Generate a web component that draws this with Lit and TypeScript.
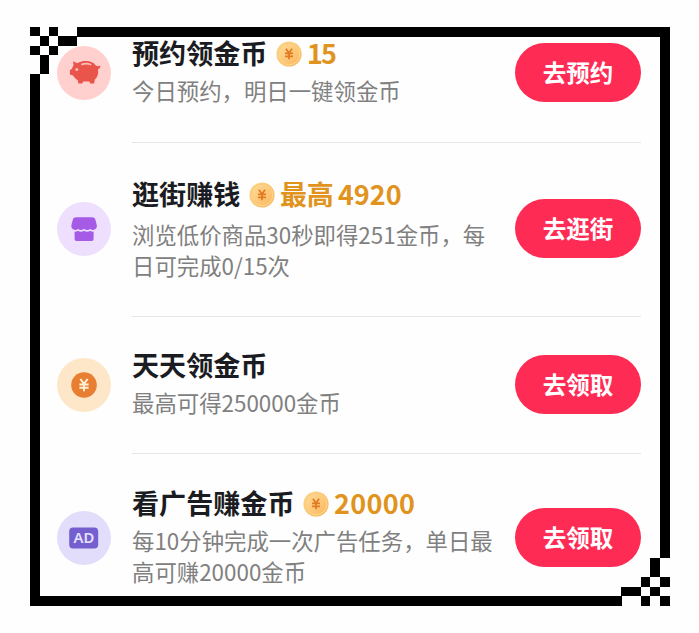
import { LitElement, html, css, svg, nothing, TemplateResult } from "lit";
import { customElement, property } from "lit/decorators.js";

type IconName = "pig" | "shop" | "coin" | "ad";

interface Task {
  id: string;
  icon: IconName;
  title: string;
  prefix?: string;
  reward?: string;
  lines: string[];
  action: string;
}

const TASKS: Task[] = [
  { id: "reserve", icon: "pig", title: "预约领金币", reward: "15", lines: ["今日预约，明日一键领金币"], action: "去预约" },
  { id: "browse", icon: "shop", title: "逛街赚钱", prefix: "最高", reward: "4920", lines: ["浏览低价商品30秒即得251金币，每", "日可完成0/15次"], action: "去逛街" },
  { id: "daily", icon: "coin", title: "天天领金币", lines: ["最高可得250000金币"], action: "去领取" },
  { id: "advert", icon: "ad", title: "看广告赚金币", reward: "20000", lines: ["每10分钟完成一次广告任务，单日最", "高可赚20000金币"], action: "去领取" },
];

const yen = svg`<path d="M-3.6 -6 L0 -1.2 L3.6 -6 M0 -1.2 V6.2 M-4.6 -0.6 H4.6 M-4.6 2.8 H4.6" fill="none" stroke="currentColor" stroke-width="2"/>`;

const GLYPHS: Record<IconName, TemplateResult> = {
  pig: svg`
    <path fill="#e9544b" d="M16 15.2 L20.2 17.3 C22.8 15.6 26 15 29.3 15 C33.6 15 36.8 16.6 38.8 19.6 C40.4 20.4 41.8 20.4 43 19.8 L43.4 20.6 C43.1 22 42.2 22.9 41 23.4 C41.6 27.8 40.6 31.2 37.8 33.6 L37.2 37.4 H33.2 L32.4 35.4 H26.2 L25.2 37.4 H21.4 L20.8 34.2 C18.6 33 17 31.4 16 29.5 L12.9 28.6 V24.2 L15.2 22.6 C15.3 21.2 15.8 20.4 16.6 19.5 Z"/>
    <path d="M25 18.4 C27.6 17.4 31 17.4 33.6 18.5" fill="none" stroke="#fbbdb8" stroke-width="1.7" stroke-linecap="round"/>
    <circle cx="19.8" cy="23.4" r="1.5" fill="#fbbdb8"/>`,
  shop: svg`
    <path fill="#a65be6" d="M19.2 15.2 H35 C36.8 15.2 37.8 16 38.3 17.6 L39.8 23 C40.2 25.4 39.2 27 37.2 27.8 C35.6 28.2 34.2 27.7 33.3 26.7 C31.7 28.4 29 28.4 27.1 26.7 C25.2 28.4 22.5 28.4 20.9 26.7 C20 27.7 18.6 28.2 17 27.8 C15 27 14 25.4 14.4 23 L15.9 17.6 C16.4 16 17.4 15.2 19.2 15.2 Z"/>
    <path fill="#a65be6" d="M17.6 29.6 Q19.4 29.8 20.8 28.7 Q24 31 27.1 28.7 Q30.2 31 33.4 28.7 Q34.8 29.8 36.6 29.6 V36.4 Q36.6 39 34 39 H20.2 Q17.6 39 17.6 36.4 Z"/>`,
  coin: svg`<circle cx="27" cy="27" r="12.8" fill="#e87e32"/><g transform="translate(27 27)" color="#fff0d5">${yen}</g>`,
  ad: svg`<rect x="12.2" y="16.4" width="29" height="21.2" rx="4" fill="#755fcf"/><text x="26.9" y="32.2" class="ad" text-anchor="middle">AD</text>`,
};

@customElement("task-icon")
export class TaskIcon extends LitElement {
  @property() name: IconName = "coin";
  static styles = css`
    :host { display: block; width: 54px; height: 54px; border-radius: 50%; }
    :host([name="pig"]) { background: #ffd0cd; }
    :host([name="shop"]) { background: #eedffe; }
    :host([name="coin"]) { background: #fee7c8; }
    :host([name="ad"]) { background: #e2ddfb; }
    svg { display: block; width: 54px; height: 54px; }
    .ad { font: 600 14.8px "Noto Sans", sans-serif; fill: #e6e1ff; }
  `;
  render() {
    return html`<svg viewBox="0 0 54 54">${GLYPHS[this.name]}</svg>`;
  }
}

@customElement("gold-coin")
export class GoldCoin extends LitElement {
  static styles = css`
    :host { display: block; width: 26px; height: 26px; color: #e27a22; }
    svg { display: block; }
  `;
  render() {
    return html`<svg width="26" height="26" viewBox="0 0 26 26">
      <defs><linearGradient id="g" x1="0" y1="0" x2="1" y2="1">
        <stop offset="0" stop-color="#fbd98f"/><stop offset="1" stop-color="#f7b458"/>
      </linearGradient><linearGradient id="r" x1="0" y1="0" x2="1" y2="1">
        <stop offset="0" stop-color="#f6c670"/><stop offset="1" stop-color="#ffe09a"/>
      </linearGradient><linearGradient id="f" x1="0" y1="0" x2="1" y2="1">
        <stop offset="0" stop-color="#ffdc98"/><stop offset="1" stop-color="#fbb75f"/>
      </linearGradient></defs>
      <circle cx="13" cy="13" r="12.6" fill="url(#g)"/>
      <circle cx="13" cy="13" r="10.8" fill="url(#f)" stroke="url(#r)" stroke-width="1"/>
      <g transform="translate(13 13) scale(.86)">${yen}</g>
    </svg>`;
  }
}

@customElement("pixel-frame")
export class PixelFrame extends LitElement {
  static styles = css`
    :host { display: block; width: 640px; height: 579px; }
    svg { display: block; }
  `;
  render() {
    return html`<svg width="640" height="579" viewBox="0 0 640 579" shape-rendering="crispEdges">
      <path d="M47 0H639.6V531H630V10H47Z"/>
      <path d="M0 47H10V569H592V579H0Z"/>
      <path d="M0 0H10V9H0ZM19 0H28V9H19ZM10 9H19V19H10ZM28 9H47V19H28ZM0 19H10V28H0ZM19 19H28V28H19ZM10 28H19V47H10Z"/>
      <path d="M620 531H630V550H620ZM611 550H620V560H611ZM630 550H640V560H630ZM591 560H611V569H591ZM620 560H630V569H620ZM611 569H620V579H611ZM630 569H640V579H630Z"/>
    </svg>`;
  }
}

@customElement("app-root")
export class AppRoot extends LitElement {
  static styles = css`
    :host {
      display: block; box-sizing: border-box; width: 699px; height: 633px; overflow: hidden;
      padding: 37px 58px 0 57px; position: relative; background: #fefefe;
      font-family: "Noto Sans CJK SC", sans-serif;
    }
    pixel-frame { position: absolute; left: 30px; top: 27px; pointer-events: none; }
    .row { display: grid; grid-template-columns: 54px 1fr; column-gap: 21px; box-sizing: border-box; }
    .reserve { height: 106px; }
    .browse { height: 174px; }
    .daily { height: 137px; }
    .advert { height: 142px; }
    .body { display: flex; justify-content: space-between; box-sizing: border-box; border-bottom: 1px solid #e6e6e6; }
    .advert .body { border-bottom: 0; }
    .reserve task-icon { margin-top: 9px; }
    .browse task-icon { margin-top: 59px; }
    .daily task-icon { margin-top: 41px; }
    .advert task-icon { margin-top: 57px; }
    .copy { white-space: nowrap; width: 370px; }
    .reserve .copy { margin-top: -2px; }
    .browse .copy { padding-top: 33px; }
    .daily .copy { padding-top: 30px; }
    .advert .copy { padding-top: 31px; }
    .head { display: flex; align-items: center; height: 36px; }
    .title { font-size: 27.1px; font-weight: 700; line-height: 36px; color: #1b1c22; }
    gold-coin { margin: 2px 0 0 8.5px; }
    .reward { margin-left: 5px; display: flex; gap: 4px; font-size: 27px; font-weight: 700; line-height: 36px; color: #e1941d; }
    .reserve .reward { letter-spacing: -2px; }
    .advert .reward { letter-spacing: .3px; }
    .lines { margin-top: 4px; font-size: 22.4px; line-height: 31px; color: #808080; font-weight: 400; }
    .browse .lines { margin-top: 7px; }
    button {
      width: 126px; height: 59px; margin: 0; padding: 0; border: 0; border-radius: 30px; flex: none;
      background: #fe2c55; color: #fff; font: 700 23.5px/59px "Noto Sans CJK SC", sans-serif;
    }
    .reserve button { margin-top: 6px; }
    .browse button { margin-top: 56px; }
    .daily button { margin-top: 38px; }
    .advert button { margin-top: 54px; }
  `;

  render() {
    return html`
      ${TASKS.map((t) => html`
        <section class="row ${t.id}">
          <task-icon name=${t.icon}></task-icon>
          <div class="body">
            <div class="copy">
              <div class="head">
                <span class="title">${t.title}</span>
                ${t.reward
                  ? html`<gold-coin></gold-coin><span class="reward">${t.prefix ? html`<span>${t.prefix}</span>` : nothing}<span>${t.reward}</span></span>`
                  : nothing}
              </div>
              <div class="lines">${t.lines.map((l) => html`<div>${l}</div>`)}</div>
            </div>
            <button>${t.action}</button>
          </div>
        </section>`)}
      <pixel-frame></pixel-frame>
    `;
  }
}
